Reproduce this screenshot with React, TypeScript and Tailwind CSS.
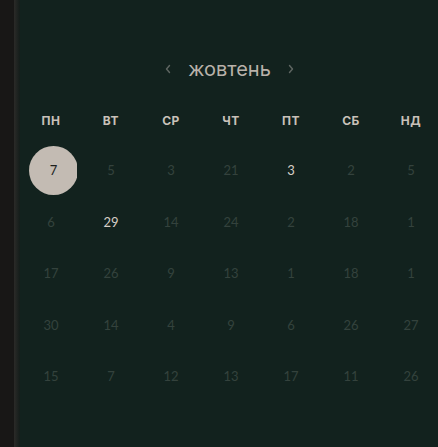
const days = ["ПН", "ВТ", "СР", "ЧТ", "ПТ", "СБ", "НД"];

type Cell = { n: number; state?: "selected" | "active" };

const weeks: Cell[][] = [
  [{ n: 7, state: "selected" }, { n: 5 }, { n: 3 }, { n: 21 }, { n: 3, state: "active" }, { n: 2 }, { n: 5 }],
  [{ n: 6 }, { n: 29, state: "active" }, { n: 14 }, { n: 24 }, { n: 2 }, { n: 18 }, { n: 1 }],
  [{ n: 17 }, { n: 26 }, { n: 9 }, { n: 13 }, { n: 1 }, { n: 18 }, { n: 1 }],
  [{ n: 30 }, { n: 14 }, { n: 4 }, { n: 9 }, { n: 6 }, { n: 26 }, { n: 27 }],
  [{ n: 15 }, { n: 7 }, { n: 12 }, { n: 13 }, { n: 17 }, { n: 11 }, { n: 26 }],
];

function Chevron({ dir }: { dir: "left" | "right" }) {
  return (
    <svg width="10" height="10" viewBox="0 0 10 10" fill="none" stroke="#5f6662" strokeWidth="1.4" strokeLinecap="round" strokeLinejoin="round">
      {dir === "left" ? <path d="M6.5 1.5 3.5 5l3 3.5" /> : <path d="M3.5 1.5 6.5 5l-3 3.5" />}
    </svg>
  );
}

function DayCell({ cell }: { cell: Cell }) {
  if (cell.state === "selected") {
    // selected circle sits a bit right of center and gets clipped on its right edge
    return (
      <div className="flex h-[51.5px] items-center">
        <div className="ml-[8px] w-[48px] overflow-hidden">
          <div className="flex h-[49px] w-[49px] items-center justify-center rounded-full bg-[#c3bbb3] text-[13px] text-[#1c1f1d]">
            {cell.n}
          </div>
        </div>
      </div>
    );
  }
  return (
    <div
      className={
        cell.state === "active"
          ? "flex h-[51.5px] items-center justify-center text-[13px] text-[#d6cec6]"
          : "flex h-[51.5px] items-center justify-center text-[13px] text-[#34423d]"
      }
    >
      {cell.n}
    </div>
  );
}

export default function App() {
  return (
    <div className="flex h-[447px] w-[438px] overflow-hidden bg-[#12221e]" style={{ fontFamily: "Lato, 'Noto Sans', sans-serif" }}>
      <div className="w-[14px] shrink-0 bg-[#181716]" />
      <div className="w-[6px] shrink-0 bg-gradient-to-r from-[#2b2a28] to-[#141d1a]" />
      <div className="flex w-[420px] shrink-0 flex-col pl-[1px] pt-[57px]">
        <div className="flex h-6 items-center justify-center gap-[15px] pr-[2px]">
          <Chevron dir="left" />
          <span className="text-[20px] leading-6 text-[#b9b2aa]" style={{ fontFamily: "Inter, 'Liberation Sans', sans-serif" }}>
            жовтень
          </span>
          <Chevron dir="right" />
        </div>
        <div className="mt-[28px] grid grid-cols-[repeat(7,60px)]">
          {days.map((d) => (
            <div
              key={d}
              className="flex h-6 items-center justify-center text-[12px] font-bold tracking-[0.5px] text-[#c9c1b9]"
              style={{ fontFamily: "Inter, 'Liberation Sans', sans-serif" }}
            >
              {d}
            </div>
          ))}
        </div>
        <div className="mt-[12px] grid grid-cols-[repeat(7,60px)]">
          {weeks.flatMap((w, i) => w.map((c, j) => <DayCell key={`${i}-${j}`} cell={c} />))}
        </div>
      </div>
    </div>
  );
}
